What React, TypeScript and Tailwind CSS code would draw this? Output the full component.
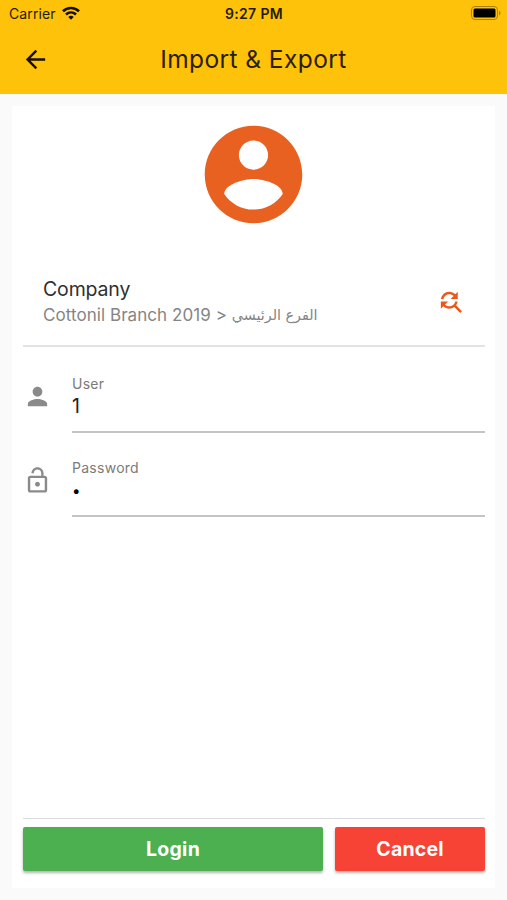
import React from "react";

const ACCOUNT =
  "M12 2C6.48 2 2 6.48 2 12s4.48 10 10 10 10-4.48 10-10S17.52 2 12 2zm0 3c1.66 0 3 1.34 3 3s-1.34 3-3 3-3-1.34-3-3 1.34-3 3-3zm0 14.2c-2.5 0-4.71-1.28-6-3.22.03-1.99 4-3.08 6-3.08 1.99 0 5.97 1.09 6 3.08-1.29 1.94-3.5 3.22-6 3.22z";
const FIND_REPLACE =
  "M11 6c1.38 0 2.63.56 3.54 1.46L12 10h6V4l-2.05 2.05C14.68 4.78 12.93 4 11 4c-3.53 0-6.43 2.61-6.92 6H6.1c.46-2.28 2.48-4 4.9-4zm5.64 9.14c.66-.9 1.12-1.97 1.28-3.14H15.9c-.46 2.28-2.48 4-4.9 4-1.38 0-2.63-.56-3.54-1.46L10 12H4v6l2.05-2.05C7.32 17.22 9.07 18 11 18c1.55 0 2.98-.51 4.14-1.36L20 21.49 21.49 20l-4.85-4.86z";
const PERSON =
  "M12 12c2.21 0 4-1.79 4-4s-1.79-4-4-4-4 1.79-4 4 1.79 4 4 4zm0 2c-2.67 0-8 1.34-8 4v2h16v-2c0-2.66-5.33-4-8-4z";
const LOCK_OPEN =
  "M12 17c1.1 0 2-.9 2-2s-.9-2-2-2-2 .9-2 2 .9 2 2 2zm6-9h-1V6c0-2.76-2.24-5-5-5S7 3.24 7 6h1.9c0-1.71 1.39-3.1 3.1-3.1 1.71 0 3.1 1.39 3.1 3.1v2H6c-1.1 0-2 .9-2 2v10c0 1.1.9 2 2 2h12c1.1 0 2-.9 2-2V10c0-1.1-.9-2-2-2zm0 12H6V10h12v10z";
const ARROW_BACK = "M20 11H7.83l5.59-5.59L12 4l-8 8 8 8 1.41-1.41L7.83 13H20v-2z";

function Icon({ d, className }: { d: string; className: string }) {
  return (
    <svg viewBox="0 0 24 24" fill="currentColor" className={className}>
      <path d={d} />
    </svg>
  );
}

function StatusBar() {
  return (
    <div className="grid h-[27px] grid-cols-3 items-center pl-[9px] pr-[8px] text-[#241c00]">
      <div className="flex items-center gap-[6px]">
        <span className="text-[14px] tracking-[0.1px]">Carrier</span>
        <svg viewBox="0 0 18 14" className="mb-[2px] h-[14px] w-[18px]" fill="none" stroke="#140f00" strokeWidth="2.7">
          <path d="M1 5.3C5.6.9 12.4.9 17 5.3" />
          <path d="M4 8.5c2.9-2.7 7.1-2.7 10 0" />
          <path d="M6.3 10.9c1.4-1.4 4-1.4 5.4 0L9 13.7z" fill="#140f00" stroke="none" />
        </svg>
      </div>
      <span className="pb-px text-center text-[14px] font-semibold tracking-[0.35px]">9:27 PM</span>
      <svg viewBox="0 0 30 14" className="-mr-[2px] mb-px h-[14px] w-[30px] justify-self-end">
        <rect x="0.5" y="0.5" width="26" height="13" rx="3.5" fill="none" stroke="#a88008" />
        <rect x="2.5" y="2.5" width="22" height="9" rx="1.5" fill="#000" />
        <path d="M28 4.7c2 .8 2 3.8 0 4.6z" fill="#a88008" />
      </svg>
    </div>
  );
}

function Field({ icon, label, value }: { icon: string; label: string; value: React.ReactNode }) {
  return (
    <div className="flex h-[84px] items-start">
      <Icon d={icon} className="mt-[33px] h-[29px] w-[29px] shrink-0 text-[#8a8a8a]" />
      <div className="ml-5 flex h-[84px] flex-1 flex-col border-b-2 border-[#c4c4c4] pt-[26px]">
        <span className="text-[14px] leading-[18px] tracking-[0.27px] text-[#7b7b7b]">{label}</span>
        <span className="flex h-[26px] items-center text-[19.5px] leading-[26px] text-[#222]">{value}</span>
      </div>
    </div>
  );
}

export default function App() {
  return (
    <div className="flex h-[900px] w-[507px] flex-col bg-[#fafafa] font-['Inter','DejaVu_Sans',sans-serif]">
      <header className="h-[94px] bg-[#ffc20a]">
        <StatusBar />
        <div className="grid h-[66px] grid-cols-[70px_1fr_70px] items-center">
          <Icon d={ARROW_BACK} className="mb-px ml-[21px] h-[29px] w-[29px] text-[#140f00]" />
          <h1 className="pb-px text-center text-[24.5px] font-normal tracking-[0.42px] text-[#2a2000]">Import &amp; Export</h1>
        </div>
      </header>

      <main className="mx-3 mb-3 mt-3 flex flex-1 flex-col bg-white pl-[11px] pr-[10px]">
        <div className="flex h-[156px] justify-center pr-px pt-[10px]">
          <Icon d={ACCOUNT} className="h-[117px] w-[117px] text-[#e96120]" />
        </div>

        <section className="mb-[2px] flex h-[85px] items-start justify-between border-b-2 border-[#e3e3e3] pl-5 pr-5">
          <div className="flex flex-col pt-[14px]">
            <span className="mb-px text-[19.5px] leading-[26px] tracking-[-0.15px] text-[#303030]">Company</span>
            <span className="flex whitespace-pre text-[17px] leading-[24px] tracking-[0.06px] text-[#858585]">
              <span>Cottonil Branch 2019 &gt; </span>
              <span dir="rtl" className="font-['DejaVu_Sans',sans-serif] text-[14.3px] tracking-normal">الفرع الرئيسي</span>
            </span>
          </div>
          <Icon d={FIND_REPLACE} className="mt-[25px] h-[29px] w-[29px] text-[#e8591b]" />
        </section>

        <Field icon={PERSON} label="User" value="1" />
        <Field
          icon={LOCK_OPEN}
          label="Password"
          value={<span className="pt-[2px] text-[15px] text-black">•</span>}
        />

        <footer className="mb-[17px] mt-auto flex gap-3 border-t border-[#dcdcdc] pt-[8px]">
          <button className="h-11 w-[300px] rounded-[2px] bg-[#4caf50] pt-px text-[19.5px] font-bold tracking-[0.3px] text-white shadow-[0_2px_3px_rgba(0,0,0,0.3)]">
            Login
          </button>
          <button className="h-11 flex-1 rounded-[2px] bg-[#f64336] pt-px text-[19.5px] font-bold tracking-[0.2px] text-white shadow-[0_2px_3px_rgba(0,0,0,0.3)]">
            Cancel
          </button>
        </footer>
      </main>
    </div>
  );
}
